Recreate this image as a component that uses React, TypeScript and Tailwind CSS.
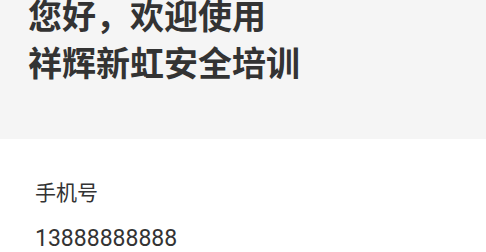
export default function App() {
  return (
    <div className="w-[486px] h-[252px] overflow-hidden bg-white" style={{ fontFamily: 'Roboto, "Noto Sans CJK SC", sans-serif' }}>
      <div className="flex h-[139px] flex-col bg-[#f5f5f5] pl-[28px]">
        <h1 className="-mt-[6px] text-[34px] leading-[47px] font-bold text-[#333333]">
          您好，欢迎使用
          <br />
          祥辉新虹安全培训
        </h1>
      </div>
      <div className="px-[35px] pt-[38px]">
        <div className="text-[21px] leading-[32px] text-[#333333]">手机号</div>
        <div className="mt-[14px] text-[23px] leading-[32px] text-[#333333]">13888888888</div>
      </div>
    </div>
  );
}
